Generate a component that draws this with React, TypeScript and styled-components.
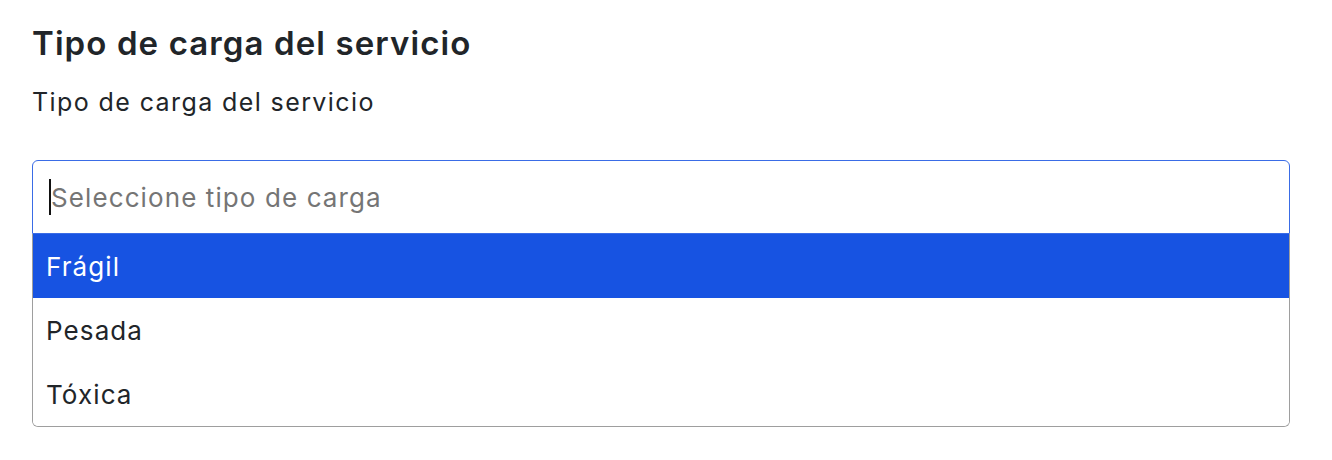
import styled, { createGlobalStyle } from 'styled-components';

const GlobalStyle = createGlobalStyle`
  * { box-sizing: border-box; }
  body {
    margin: 0;
    background: #fff;
    font-family: Inter, "Open Sans", sans-serif;
    color: #212529;
  }
`;

const options = ['Frágil', 'Pesada', 'Tóxica'];

function App() {
	return (
		<>
			<GlobalStyle />
			<Page>
				<Title>Tipo de carga del servicio</Title>
				<Label>Tipo de carga del servicio</Label>
				<Field>
					<Control>
						<Caret />
						<Placeholder>Seleccione tipo de carga</Placeholder>
					</Control>
					<Menu>
						{options.map((o, i) => (
							<Option key={o} active={i === 0}>{o}</Option>
						))}
					</Menu>
				</Field>
				<Hint>Seleccione un tipo de carga</Hint>
			</Page>
		</>
	);
}

const Page = styled.div`
    min-height: 460px;
    padding: 23px 42px 0 32px;
`;

const Title = styled.h2`
    margin: 0;
    font-size: 33px;
    line-height: 40px;
    font-weight: 600;
    letter-spacing: 1.1px;
`;

const Label = styled.div`
    margin-top: 24px;
    font-size: 25px;
    line-height: 30px;
    letter-spacing: 1.4px;
`;

const Field = styled.div`
    position: relative;
    margin-top: 43px;
`;

const Control = styled.div`
    height: 74px;
    border: 1px solid #3a6ce6;
    border-radius: 6px 6px 0 0;
    display: flex;
    align-items: center;
    padding: 0 16px;
`;

const Caret = styled.span`
    width: 2px;
    height: 36px;
    background: #111;
`;

const Placeholder = styled.span`
    font-size: 26px;
    color: #757575;
    letter-spacing: 1.1px;
`;

//list pops over whatever follows the field
const Menu = styled.div`
    position: absolute;
    top: 74px;
    left: 0;
    right: 0;
    background: #fff;
    border: 1px solid #9e9e9e;
    border-top: none;
    border-radius: 0 0 6px 6px;
    overflow: hidden;
    z-index: 10;
`;

const Option = styled.div<{ active?: boolean }>`
    height: 64px;
    display: flex;
    align-items: center;
    padding-left: 13px;
    font-size: 26px;
    letter-spacing: 1.1px;
    background: ${p => (p.active ? '#1753e2' : '#fff')};
    color: ${p => (p.active ? '#fff' : '#212529')};
`;

const Hint = styled.p`
    margin: 166px 0 0;
    text-align: center;
    font-size: 22px;
    line-height: 26px;
`;

export default App;
